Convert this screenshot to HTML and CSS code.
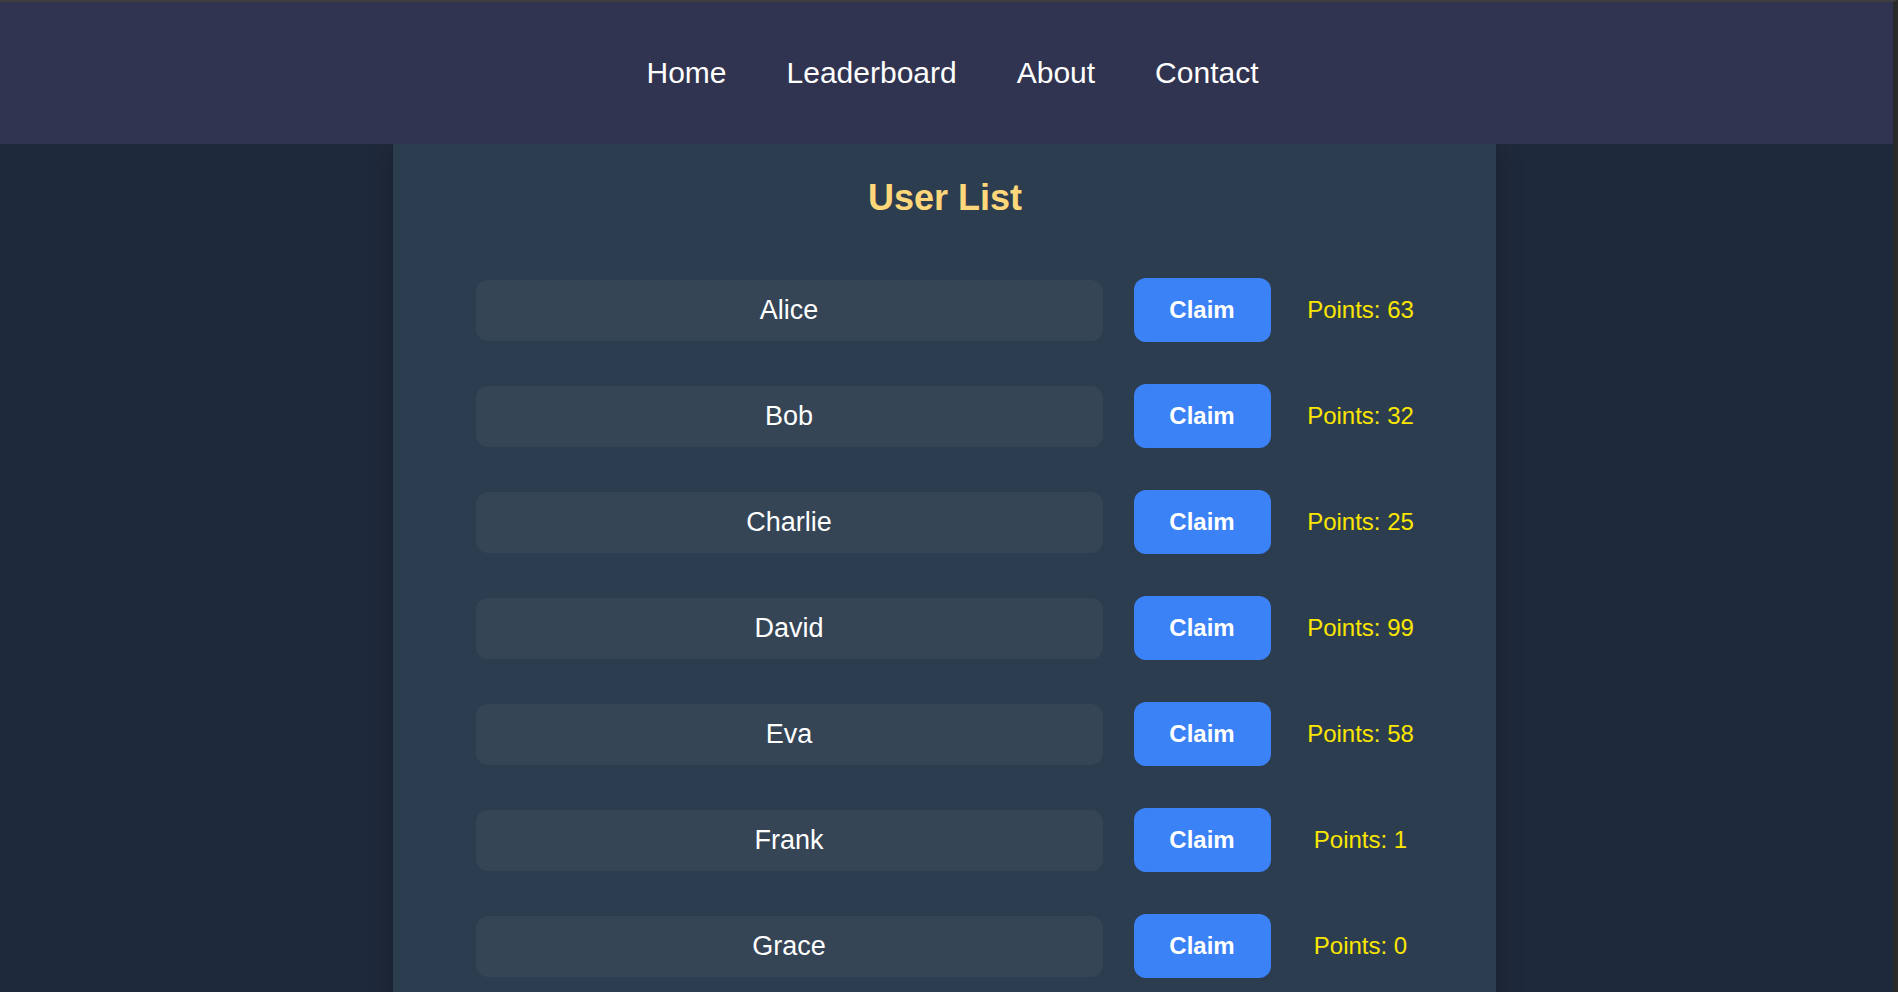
FILE: index.html
```html
<!DOCTYPE html>
<html lang="en">
<head>
<meta charset="utf-8">
<title>User List</title>
<link rel="stylesheet" href="styles.css">
</head>
<body>
<div class="page">
  <nav class="nav">
    <a class="nav-link" href="#">Home</a>
    <a class="nav-link" href="#">Leaderboard</a>
    <a class="nav-link" href="#">About</a>
    <a class="nav-link" href="#">Contact</a>
  </nav>
  <main class="panel">
    <h1 class="title">User List</h1>
    <ul class="users">
      <li class="user-row"><span class="user-name">Alice</span><button class="claim">Claim</button><span class="points">Points: 63</span></li>
      <li class="user-row"><span class="user-name">Bob</span><button class="claim">Claim</button><span class="points">Points: 32</span></li>
      <li class="user-row"><span class="user-name">Charlie</span><button class="claim">Claim</button><span class="points">Points: 25</span></li>
      <li class="user-row"><span class="user-name">David</span><button class="claim">Claim</button><span class="points">Points: 99</span></li>
      <li class="user-row"><span class="user-name">Eva</span><button class="claim">Claim</button><span class="points">Points: 58</span></li>
      <li class="user-row"><span class="user-name">Frank</span><button class="claim">Claim</button><span class="points">Points: 1</span></li>
      <li class="user-row"><span class="user-name">Grace</span><button class="claim">Claim</button><span class="points">Points: 0</span></li>
    </ul>
  </main>
</div>
</body>
</html>
```
FILE: styles.css
```css
html, body {
  margin: 0;
  padding: 0;
  height: 100%;
  overflow: hidden;
}

body {
  background: #1e293b;
  font-family: "Liberation Sans", Arial, sans-serif;
  color: #ffffff;
}

.page {
  box-sizing: border-box;
  height: 992px;
  display: flex;
  flex-direction: column;
  border-top: 2px solid #3e3e40;
  border-right: 5px solid #2a2a2b;
  overflow: hidden;
}

.nav {
  position: relative;
  z-index: 1;
  flex: 0 0 142px;
  background: #313450;
  display: flex;
  justify-content: center;
  align-items: center;
  gap: 60px;
  padding-left: 12px;
}

.nav-link {
  color: #ffffff;
  text-decoration: none;
  font-size: 30px;
  line-height: 36px;
}

.panel {
  width: 1103px;
  margin: 0 0 0 calc(50% - 554px);
  flex: 1 0 auto;
  background: #2d3d50;
  box-shadow: 0 0 25px rgba(0, 0, 0, 0.22);
  padding: 34px 75px 40px 83px;
  box-sizing: border-box;
}

.title {
  margin: 0 0 60px;
  text-align: center;
  font-size: 36px;
  line-height: 40px;
  font-weight: 700;
  color: #fdd77a;
  padding-right: 6px;
}

.users {
  list-style: none;
  margin: 0;
  padding: 0;
  display: flex;
  flex-direction: column;
  gap: 42px;
}

.user-row {
  display: flex;
  align-items: center;
  height: 64px;
}

.user-name {
  flex: 1 1 auto;
  height: 61px;
  display: flex;
  align-items: center;
  justify-content: center;
  background: #354556;
  border-radius: 12px;
  font-size: 27px;
  color: #ffffff;
}

.claim {
  flex: 0 0 137px;
  height: 64px;
  margin-left: 31px;
  border: none;
  border-radius: 12px;
  background: #3b82f6;
  color: #ffffff;
  font-family: "Liberation Sans", Arial, sans-serif;
  font-size: 24px;
  font-weight: 700;
  cursor: pointer;
}

.points {
  flex: 0 0 120px;
  margin-left: 30px;
  text-align: center;
  font-size: 24px;
  color: #fae600;
  white-space: nowrap;
}
```
